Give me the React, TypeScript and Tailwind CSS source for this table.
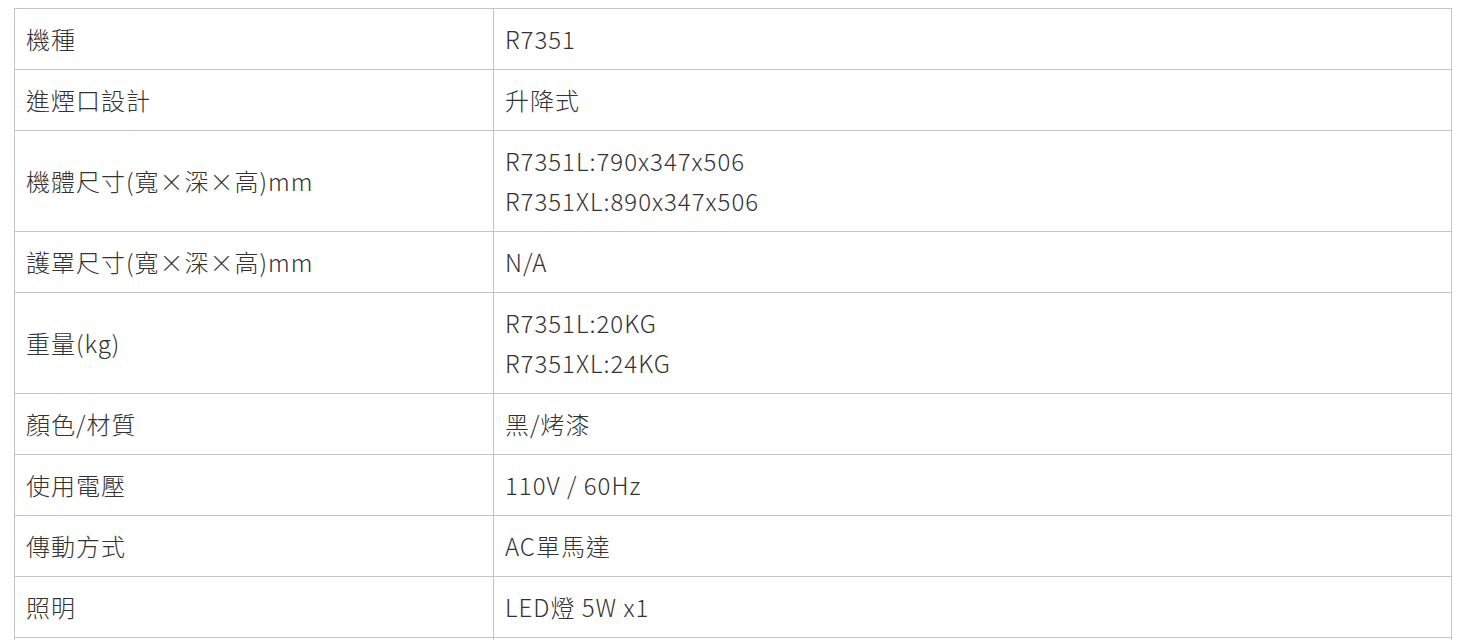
import React from 'react';

const rows: [string, string[]][] = [
  ['機種', ['R7351']],
  ['進煙口設計', ['升降式']],
  ['機體尺寸(寬×深×高)mm', ['R7351L:790x347x506', 'R7351XL:890x347x506']],
  ['護罩尺寸(寬×深×高)mm', ['N/A']],
  ['重量(kg)', ['R7351L:20KG', 'R7351XL:24KG']],
  ['顏色/材質', ['黑/烤漆']],
  ['使用電壓', ['110V / 60Hz']],
  ['傳動方式', ['AC單馬達']],
  ['照明', ['LED燈 5W x1']],
  ['\u00a0', ['\u00a0']],
];

const App = () => {
  return (
    <div className="min-h-screen bg-white pt-[8px] pl-[14px]">
      <table
        className="w-[1438px] border-collapse text-[24px] font-light leading-[40px] tracking-[1px] text-[#333333]"
        style={{ fontFamily: '"Noto Sans CJK TC", "Noto Sans", sans-serif' }}
      >
        <tbody>
          {rows.map(([label, values], i) => (
            <tr key={i}>
              <td className="w-1/3 border border-[#c4c4c4] px-[11px] py-[10px] align-middle">
                {label}
              </td>
              <td className="border border-[#c4c4c4] px-[11px] py-[10px] align-middle">
                {values.map((v, j) => (
                  <div key={j}>{v}</div>
                ))}
              </td>
            </tr>
          ))}
        </tbody>
      </table>
    </div>
  );
};

export default App;
